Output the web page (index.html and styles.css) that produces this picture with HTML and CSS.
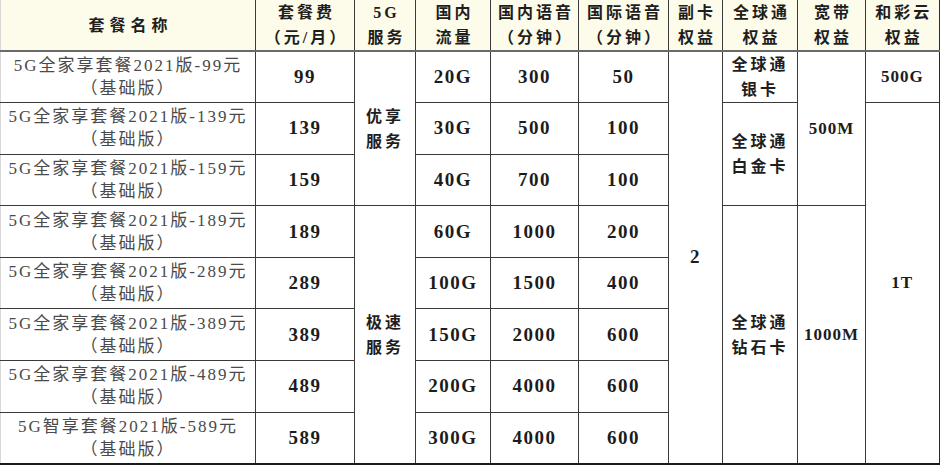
FILE: index.html
```html
<!DOCTYPE html>
<html lang="zh-CN">
<head>
<meta charset="utf-8">
<title>5G全家享套餐</title>
<link rel="stylesheet" href="styles.css">
</head>
<body>
<table class="plans">
  <colgroup>
    <col class="c-name"><col class="c-fee"><col class="c-svc"><col class="c-data"><col class="c-voice"><col class="c-intl"><col class="c-sub"><col class="c-global"><col class="c-bb"><col class="c-cloud">
  </colgroup>
  <thead>
    <tr class="head">
      <th class="wide first">套餐名称</th>
      <th>套餐费<br>（元/月）</th>
      <th>5G<br>服务</th>
      <th>国内<br>流量</th>
      <th>国内语音<br>（分钟）</th>
      <th>国际语音<br>（分钟）</th>
      <th>副卡<br>权益</th>
      <th>全球通<br>权益</th>
      <th>宽带<br>权益</th>
      <th class="last">和彩云<br>权益</th>
    </tr>
  </thead>
  <tbody>
    <tr>
      <td class="name">5G全家享套餐2021版-99元<br>（基础版）</td>
      <td class="num">99</td>
      <td class="svc" rowspan="3">优享<br>服务</td>
      <td class="num">20G</td>
      <td class="num">300</td>
      <td class="num">50</td>
      <td class="num bottom" rowspan="8">2</td>
      <td class="cjk">全球通<br>银卡</td>
      <td class="num small" rowspan="3">500M</td>
      <td class="num small last">500G</td>
    </tr>
    <tr>
      <td class="name">5G全家享套餐2021版-139元<br>（基础版）</td>
      <td class="num">139</td>
      <td class="num">30G</td>
      <td class="num">500</td>
      <td class="num">100</td>
      <td class="cjk" rowspan="2">全球通<br>白金卡</td>
      <td class="num small last bottom" rowspan="7">1T</td>
    </tr>
    <tr>
      <td class="name">5G全家享套餐2021版-159元<br>（基础版）</td>
      <td class="num">159</td>
      <td class="num">40G</td>
      <td class="num">700</td>
      <td class="num">100</td>
    </tr>
    <tr>
      <td class="name">5G全家享套餐2021版-189元<br>（基础版）</td>
      <td class="num">189</td>
      <td class="svc bottom" rowspan="5">极速<br>服务</td>
      <td class="num">60G</td>
      <td class="num">1000</td>
      <td class="num">200</td>
      <td class="cjk bottom" rowspan="5">全球通<br>钻石卡</td>
      <td class="num small bottom" rowspan="5">1000M</td>
    </tr>
    <tr>
      <td class="name">5G全家享套餐2021版-289元<br>（基础版）</td>
      <td class="num">289</td>
      <td class="num">100G</td>
      <td class="num">1500</td>
      <td class="num">400</td>
    </tr>
    <tr>
      <td class="name">5G全家享套餐2021版-389元<br>（基础版）</td>
      <td class="num">389</td>
      <td class="num">150G</td>
      <td class="num">2000</td>
      <td class="num">600</td>
    </tr>
    <tr>
      <td class="name">5G全家享套餐2021版-489元<br>（基础版）</td>
      <td class="num">489</td>
      <td class="num">200G</td>
      <td class="num">4000</td>
      <td class="num">600</td>
    </tr>
    <tr class="final">
      <td class="name">5G智享套餐2021版-589元<br>（基础版）</td>
      <td class="num">589</td>
      <td class="num">300G</td>
      <td class="num">4000</td>
      <td class="num">600</td>
    </tr>
  </tbody>
</table>
</body>
</html>
```

FILE: styles.css
```css
html, body {
  margin: 0;
  padding: 0;
  background: #ffffff;
}

.plans {
  border-collapse: collapse;
  table-layout: fixed;
  width: 939px;
  font-family: "Liberation Serif", "Noto Sans CJK SC", serif;
  color: #222222;
}

.c-name { width: 255px; }
.c-fee { width: 99px; }
.c-svc { width: 61px; }
.c-data { width: 75px; }
.c-voice { width: 88px; }
.c-intl { width: 90px; }
.c-sub { width: 54px; }
.c-global { width: 75px; }
.c-bb { width: 68px; }
.c-cloud { width: 74px; }

.plans th,
.plans td {
  border: 1px solid #3a3a3a;
  padding: 0;
  text-align: center;
  vertical-align: middle;
  overflow: hidden;
  white-space: nowrap;
}

.plans thead th {
  border-top: none;
  border-bottom: 2px solid #6a6a6a;
  background: #fdfbe9;
}

.plans th.first,
.plans td.name {
  border-left: 1px solid #d8d8d8;
}

.plans .last {
  border-right: 2px solid #2a2a2a;
}

.plans .final td,
.plans td.bottom {
  border-bottom: 2px solid #1a1a1a;
}

.head {
  height: 50px;
}

.head th {
  font-size: 16px;
  font-weight: bold;
  line-height: 25px;
  letter-spacing: 3px;
  padding-left: 3px;
  color: #1e1e1e;
}

.head th.wide {
  letter-spacing: 5px;
  padding-left: 5px;
}

.plans tbody tr {
  height: 51.6px;
}

.name {
  font-size: 17px;
  line-height: 23px;
  letter-spacing: 2px;
  color: #4a4a4a;
  font-weight: normal;
}

.num {
  font-size: 19px;
  font-weight: bold;
  letter-spacing: 1.5px;
  color: #1c1c1c;
}

.num.small {
  font-size: 17px;
  letter-spacing: 1px;
}

.svc,
.cjk {
  font-size: 16px;
  font-weight: bold;
  line-height: 25px;
  letter-spacing: 3px;
  padding-left: 3px;
  color: #1e1e1e;
}
```
